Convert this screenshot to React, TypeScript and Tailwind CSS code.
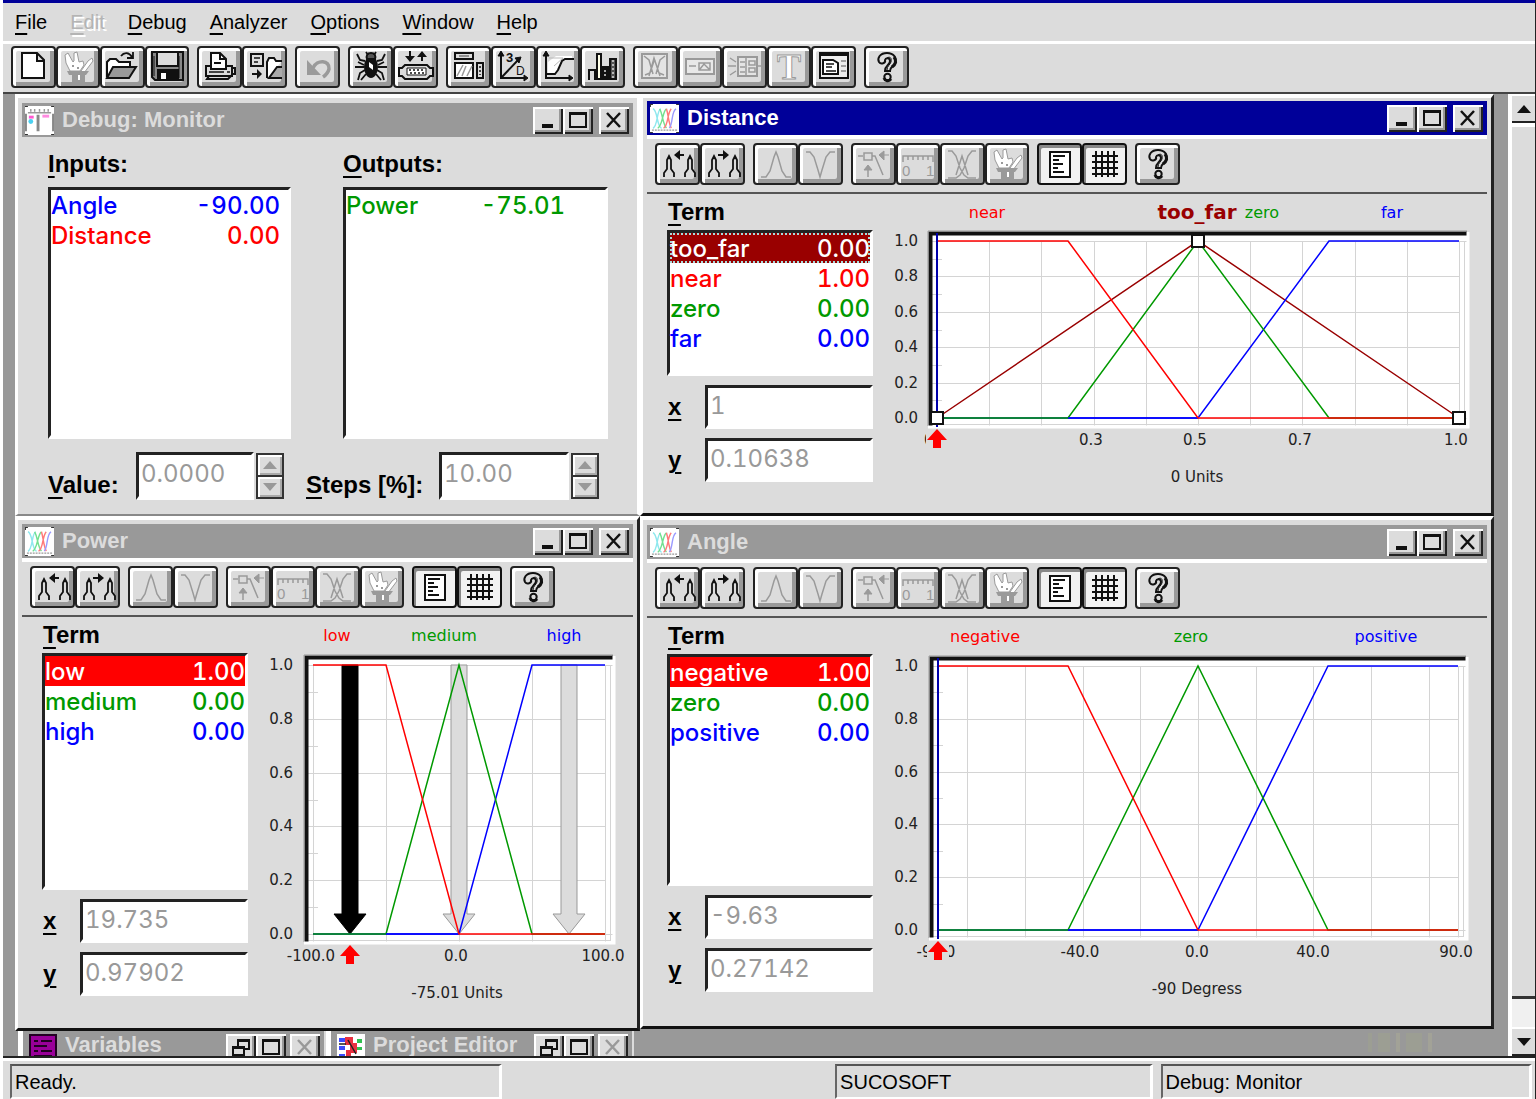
import React from "react";

const INK = "#111111";
const DIM = "#9a9a9a";

/* ---------- icons ---------- */

function Glyph({ children }: { children: React.ReactNode }) {
  return (
    <svg viewBox="0 0 40 38" className="h-[38px] w-10 shrink-0" fill="none" stroke={INK} strokeWidth="2" aria-hidden="true">
      {children}
    </svg>
  );
}

const Rabbit = () => (
  <g stroke="none">
    <path d="M7 7l3-2 5 9 1-1V5l3-1 2 10 4-1 1 4-4 6H12l-4-8z" fill="#fff" stroke={DIM} strokeWidth="1" />
    <path d="M30 13l4-3 1 3-9 12-3-2z" fill="#fff" stroke={DIM} strokeWidth="1" />
    <path d="M9 23h22l-3 4h-1v7H14v-7h-3z" fill={DIM} />
    <path d="M14 17h2v2h-2zM19 19h2v2h-2z" fill={DIM} />
    <path d="M20 27h2v5h-2z" fill="#fff" />
  </g>
);

const Question = () => (
  <g>
    <path d="M12 14c-2-4 1-9 8-9s10 5 8 10c-1 3-5 4-5 8h-5c0-6 5-6 5-10 0-3-4-4-5-1 1 3-4 5-6 2z" fill="#dcdcdc" />
    <path d="M20 10c3-2 5 0 4 4-1 3-4 4-4 8" strokeWidth="1" />
    <circle cx="20.500" cy="29" r="3.200" fill="#dcdcdc" />
    <path d="M17 30c1 3 5 4 7 1M27 9c3 4 2 7-2 10" strokeWidth="3" />
  </g>
);

const CrossCurves = () => (
  <g stroke={DIM}>
    <path d="M6 6h4l4 5 4 12 4 7 4 3h8M34 6h-4l-4 5-4 12-4 7-4 3H6M14 30l6-19 6 19" strokeWidth="1.500" />
  </g>
);

const TwoPeaks = "M6 32v-4l3-4V15l2-4 2 4v9l3 4v4M27 32v-4l3-4V15l2-4 2 4v9l3 4v4";

const ICONS: Record<string, React.ReactNode> = {
  new: <path d="M9 5h15l7 7v18H9zM24 5v8h7" fill="#fff" />,
  rabbit: <Rabbit />,
  open: (
    <g>
      <path d="M5 29V14l3-3h6l3 3h11v5" fill="#fff" />
      <path d="M5 30l6-11h23l-7 11z" fill="#999" />
      <path d="M19 8c3-4 8-4 11 1M31 4v6h-6" strokeWidth="1.800" />
    </g>
  ),
  save: (
    <g>
      <path d="M5 4h31v28H8l-3-3z" fill="#888" />
      <path d="M10 4h21v14H10z" fill="#dcdcdc" />
      <path d="M11 22h20v10H11z" fill="#111" />
      <path d="M14 25h5v6h-5z" fill="#fff" stroke="none" />
      <path d="M32 8v22M7 8v20" strokeWidth="1" />
    </g>
  ),
  print: (
    <g>
      <path d="M6 18h26v10H6z" fill="#dcdcdc" />
      <path d="M11 21V5h9l6 6v10z" fill="#fff" />
      <path d="M20 5v6h6" />
      <path d="M32 20h3v6h-3" />
      <path d="M9 28l-2 3h21l4-4M14 15h7" />
      <path d="M9 24h15M27 24h3" strokeWidth="1.500" />
    </g>
  ),
  transfer: (
    <g>
      <path d="M6 6h12v12H6z" fill="#dcdcdc" />
      <path d="M9 10h6M9 14h4" strokeWidth="1.500" />
      <path d="M7 26h8" />
      <path d="M12 21l5 5-5 5z" fill="#111" stroke="none" />
      <path d="M22 30V14l2-4h5l2 3h6" fill="#fff" />
      <path d="M37 19h-5l-8 11h13" fill="#aaa" />
    </g>
  ),
  undo: (
    <g stroke={DIM} fill={DIM}>
      <path d="M9 12v15h14z" stroke="none" />
      <path d="M15 20c4-9 17-8 16 1-1 4-3 6-6 8" fill="none" strokeWidth="3.500" />
    </g>
  ),
  bug: (
    <g>
      <ellipse cx="20" cy="19" rx="6" ry="10" fill="#111" />
      <path d="M20 5c-4 0-5 3-4 6h8c1-3 0-6-4-6z" fill="#555" />
      <path d="M15 4l2 3M25 4l-2 3M14 13L9 12 6 6M26 13l5-1 3-6M13 19H4M27 19h9M14 22l-5 3-2 7M26 22l5 3 2 7M15 26l-5 6M25 26l5 6M7 14l6 3M33 14l-6 3" strokeWidth="1.800" />
      <path d="M18 14l4 3v5l-4-3z" fill="#fff" stroke="none" />
    </g>
  ),
  port: (
    <g>
      <path d="M14 3v8M26 13V7" />
      <path d="M9 8h10l-5 6zM21 9h10l-5-6z" fill="#111" stroke="none" />
      <path d="M9 17h22l3 3h3v8h-3l-3 3H9l-3-3H3v-8h3z" fill="#dcdcdc" />
      <path d="M11 20h19v7H11z" fill="#fff" strokeWidth="1" />
      <path d="M13 22h16M14 25h14" strokeWidth="1.500" strokeDasharray="2 2" />
    </g>
  ),
  blocks: (
    <g>
      <path d="M7 5h18v6H7z" fill="#ddd" />
      <path d="M11 8h10" strokeWidth="1.500" stroke="#777" />
      <path d="M7 15h18v15H7z" fill="#fff" />
      <path d="M9 28l6-11M14 28l4-10M19 28l5-10" strokeWidth="1.500" stroke="#999" />
      <path d="M29 15h6v15h-6z" fill="#ddd" />
      <path d="M32 18v9" strokeWidth="1.500" strokeDasharray="2 2" />
    </g>
  ),
  axes3d: (
    <g>
      <path d="M8 4v26h25M8 30L26 11" />
      <path d="M5 8l3-5 3 5zM31 27l4 3-4 3zM22 10l6-1-2 6z" fill="#111" strokeWidth="1" />
      <text x="13" y="14" fill={INK} stroke="none" fontFamily="Liberation Sans" fontWeight="700" fontSize="13">3</text>
      <text x="23" y="27" fill={INK} stroke="none" fontFamily="Liberation Sans" fontSize="12">D</text>
    </g>
  ),
  curve: (
    <g>
      <path d="M10 26V14l8-6h16v4h-8l-8 15z" fill="#fff" stroke="none" />
      <path d="M11 10h14l-9 8" stroke="#bbb" strokeWidth="1" />
      <path d="M8 4v26h25M8 26h9l3-4 4-9 3-2h9" />
      <path d="M5 8l3-5 3 5zM31 27l4 3-4 3z" fill="#111" strokeWidth="1" />
    </g>
  ),
  bars: (
    <g>
      <path d="M6 32V22h6v10" fill="#dcdcdc" />
      <path d="M14 31V6h4v25z" fill="#ffffe8" />
      <path d="M19 19h7v12h-7z" fill="#111" />
      <path d="M27 11h6v20h-6z" fill="#555" />
      <path d="M30 12v18M22 22v6" stroke="#ddd" strokeDasharray="2 2" strokeWidth="1.500" />
    </g>
  ),
  crossBox: (
    <g stroke={DIM}>
      <path d="M7 6h25v24H7z" fill="#e4e4e4" />
      <path d="M9 8l5 4 4 14M30 8l-5 4-4 14M14 28l5-18 6 18M10 27l5-2 4-12M29 27l-5-2-4-12" strokeWidth="1.500" />
    </g>
  ),
  paramBox: (
    <g stroke={DIM}>
      <path d="M6 11h28v15H6z" fill="#e8e8e8" />
      <path d="M9 18h7M19 15h11v7H19zM20 21l4-5 5 5" strokeWidth="1.500" />
    </g>
  ),
  chip: (
    <g stroke={DIM}>
      <path d="M14 9h19v19H14z" fill="#e4e4e4" />
      <path d="M6 10l6 4M4 18h8M6 27l6-4M22 10v17M16 14h5M16 19h5M16 24h5M25 13h6v4h-6zM25 20h6v4h-6zM33 18h4" strokeWidth="1.500" />
    </g>
  ),
  text: (
    <text x="20" y="31" textAnchor="middle" fill="#fff" stroke={DIM} strokeWidth="1" fontFamily="Liberation Serif" fontWeight="700" fontSize="36">
      T
    </text>
  ),
  dialog: (
    <g>
      <path d="M6 5h28v25H6z" fill="#eee" />
      <path d="M5 6h30" strokeWidth="4" />
      <path d="M9 12h10l5 3v11H9z" fill="#fff" />
      <path d="M12 16h8M12 19h6M12 23h10" strokeWidth="1.500" />
      <path d="M27 13h5M27 18h5M27 23h5" stroke="#888" strokeWidth="1.500" />
    </g>
  ),
  help: <Question />,
  peaksLeft: (
    <g>
      <path d={TwoPeaks} strokeWidth="1.800" />
      <path d="M17 10h9" />
      <path d="M22 5v10l-6-5z" fill="#111" stroke="none" />
    </g>
  ),
  peaksRight: (
    <g>
      <path d={TwoPeaks} strokeWidth="1.800" />
      <path d="M15 10h9" />
      <path d="M20 5v10l6-5z" fill="#111" stroke="none" />
    </g>
  ),
  peak: <path d="M5 32h5l4-6 4-14 2-5 2 5 4 14 4 6h5" stroke={DIM} strokeWidth="1.500" />,
  valley: <path d="M5 7h4l4 5 4 13 2 7 2-7 4-13 4-5h5" stroke={DIM} strokeWidth="1.500" />,
  handle: (
    <g stroke={DIM}>
      <path d="M5 11h5M11 8h8v7h-8zM19 11h3l8 19M15 32V22" strokeWidth="1.500" />
      <path d="M11 25l4-5 4 5zM31 6v9l-5-5zM30 10h6" fill={DIM} strokeWidth="1" />
    </g>
  ),
  ruler: (
    <g stroke={DIM}>
      <path d="M5 17v-6h30v6M10 11v4M15 11v4M20 11v4M25 11v4M30 11v4" strokeWidth="1.500" />
      <text x="4" y="31" fill={DIM} stroke="none" fontFamily="Liberation Sans" fontSize="15">0</text>
      <text x="28" y="31" fill={DIM} stroke="none" fontFamily="Liberation Sans" fontSize="15">1</text>
    </g>
  ),
  cross: <CrossCurves />,
  page: (
    <g>
      <path d="M10 7h20v25H10z" fill="#fff" />
      <path d="M13 11h12M13 15h6M13 19h10M13 23h5M13 27h11" />
    </g>
  ),
  grid: <path d="M11 6v26M17 6v26M23 6v26M29 6v26M7 11h26M7 17h26M7 23h26M7 29h26" />,
};

const CurvesMark = () => (
  <svg viewBox="0 0 30 30" className="h-[29px] w-[29px] shrink-0" fill="none" strokeWidth="1.500" aria-hidden="true">
    <rect width="30" height="30" fill="#fff" />
    <path d="M3 5c5 1 4 19 9 20M3 25c5-1 4-19 8-20" stroke="#8fe8ee" />
    <path d="M8 25c5-2 5-18 9-20M10 5c3 5 3 15 7 20" stroke="#72e090" />
    <path d="M14 25c5-2 4-17 8-20M17 5c2 6 2 14 5 20" stroke="#ff7a7a" />
    <path d="M20 25c4-5 2-18 7-20" stroke="#9a9aff" />
    <path d="M2 27h26" stroke="#999" strokeDasharray="2 1" />
    <path d="M0 0h3M0 0v3M27 0h3M0 30h3M27 30h3" stroke="#333" strokeWidth="2" />
  </svg>
);

const MonitorMark = () => (
  <svg viewBox="0 0 30 30" className="h-[29px] w-[29px] shrink-0" aria-hidden="true">
    <rect width="30" height="30" fill="#fff" />
    <path d="M3 7h24M6 3v3M10 3v3M15 3v3M20 3v3M24 3v3" stroke="#999" strokeWidth="1.500" />
    <path d="M0 8h2v18H0zM28 8h2v18h-2zM12 9h3v17h-3z" fill="#888" />
    <path d="M4 10h5v3H4z" fill="#ff5ad0" />
    <path d="M18 9h7v3h-7z" fill="#ff8ae0" />
    <circle cx="6" cy="16" r="2.500" fill="#4ad0f0" />
    <path d="M0 0h3M27 0h3M0 30h3M27 30h3" stroke="#333" strokeWidth="2" />
  </svg>
);

/* ---------- building blocks ---------- */

function ToolButton({ icon, label, pressed = false }: { icon: string; label: string; pressed?: boolean }) {
  return (
    <button
      type="button"
      aria-label={label}
      className={
        pressed
          ? "flex h-[42px] flex-1 items-center justify-center overflow-hidden rounded border-2 border-[#111] bg-[#f2f2f2] shadow-[inset_2px_3px_0_#888]"
          : "flex h-[42px] flex-1 items-center justify-center overflow-hidden rounded border-2 border-[#222] bg-[#dcdcdc] shadow-[inset_3px_3px_0_#fff,inset_-4px_-4px_0_#999]"
      }
    >
      <Glyph>{ICONS[icon]}</Glyph>
    </button>
  );
}

function WindowButton({ kind, label, faded = false }: { kind: "min" | "max" | "close" | "restore"; label: string; faded?: boolean }) {
  const ink = faded ? "#999" : "#111";
  return (
    <button
      type="button"
      aria-label={label}
      className="h-[27px] w-[30px] shrink-0 bg-[#dcdcdc] shadow-[inset_2px_2px_0_#fff,inset_-2px_-2px_0_#222,inset_-4px_-4px_0_#999]"
    >
      <svg viewBox="0 0 30 27" className="h-[27px] w-[30px]" fill="none" stroke={ink} strokeWidth="2" aria-hidden="true">
        {kind === "min" && <path d="M9 19h11" strokeWidth="4" />}
        {kind === "max" && <path d="M7 7h16v13H7zM6 6h18" shapeRendering="crispEdges" />}
        {kind === "close" && <path d="M8 6l13 14M21 6L8 20" strokeWidth="2.500" />}
        {kind === "restore" && <path d="M12 13V6h11v9h-4M11 7h13M7 13h11v8H7zM6 14h13" />}
      </svg>
    </button>
  );
}

function TitleBar({ title, mark, active = false }: { title: string; mark: React.ReactNode; active?: boolean }) {
  return (
    <header
      className={
        active
          ? "flex h-[34px] items-center bg-[#000099] pl-[3px] pr-1 text-white"
          : "flex h-[34px] items-center bg-[#999999] pl-[3px] pr-1 text-[#dcdcdc]"
      }
    >
      {mark}
      <h2 className="ml-2 flex-1 truncate text-[22px] font-bold leading-[34px]">{title}</h2>
      <div className="flex">
        <WindowButton kind="min" label="Minimize" />
        <WindowButton kind="max" label="Maximize" />
        <div className="ml-[6px] flex">
          <WindowButton kind="close" label="Close" />
        </div>
      </div>
    </header>
  );
}

function TermToolbar() {
  return (
    <div className="flex gap-2 border-b-2 border-[#555] border-t-4 border-t-white pb-[7px] pl-2 pt-1">
      <div className="flex w-[90px]">
        <ToolButton icon="peaksLeft" label="Previous term" />
        <ToolButton icon="peaksRight" label="Next term" />
      </div>
      <div className="flex w-[90px]">
        <ToolButton icon="peak" label="Peak" />
        <ToolButton icon="valley" label="Valley" />
      </div>
      <div className="flex w-[178px]">
        <ToolButton icon="handle" label="Edit points" />
        <ToolButton icon="ruler" label="Range" />
        <ToolButton icon="cross" label="Standard terms" />
        <ToolButton icon="rabbit" label="Wizard" />
      </div>
      <div className="flex w-[90px]">
        <ToolButton icon="page" label="Show terms" pressed />
        <ToolButton icon="grid" label="Show grid" pressed />
      </div>
      <div className="flex w-[45px]">
        <ToolButton icon="help" label="Help" />
      </div>
    </div>
  );
}

type Tone = "red" | "green" | "blue" | "maroon";
const STROKE: Record<Tone, string> = { red: "#ff0000", green: "#009900", blue: "#0000ff", maroon: "#990000" };
const TEXT: Record<Tone, string> = {
  red: "text-[#ff0000]",
  green: "text-[#009900]",
  blue: "text-[#0000ff]",
  maroon: "text-[#990000]",
};
const SELECTED: Record<Tone, string> = {
  red: "bg-[#ff0000] text-white",
  green: "bg-[#009900] text-white",
  blue: "bg-[#0000ff] text-white",
  maroon: "bg-[#990000] text-white outline-2 -outline-offset-2 outline-dotted outline-[#a8dcdc]",
};

type Row = { name: string; value: string; tone: Tone; selected?: boolean };

function ListBox({ rows, label, className, rowClass }: { rows: Row[]; label: string; className: string; rowClass: string }) {
  return (
    <ul
      role="listbox"
      aria-label={label}
      className={`border-b-4 border-l-[3px] border-r-[3px] border-t-[3px] border-b-white border-l-[#222] border-r-white border-t-[#222] bg-white ${className}`}
    >
      {rows.map((r) => (
        <li
          key={r.name}
          role="option"
          aria-selected={!!r.selected}
          className={`flex h-[30px] justify-between pt-px font-[Inter] text-2xl font-medium leading-[30px] tabular-nums ${rowClass} ${r.selected ? SELECTED[r.tone] : TEXT[r.tone]}`}
        >
          <span>{r.name}</span>
          <span>{r.value}</span>
        </li>
      ))}
    </ul>
  );
}

const FIELD =
  "min-w-0 border-b-4 border-l-[3px] border-r-[3px] border-t-[3px] border-b-white border-l-[#222] border-r-white border-t-[#222] bg-white pl-[2px] font-[Inter] text-2xl text-[#999] tabular-nums";

function Hot({ text }: { text: string }) {
  return (
    <>
      <span className="underline decoration-2 underline-offset-4">{text[0]}</span>
      {text.slice(1)}
    </>
  );
}

function Coordinate({ id, axis, value }: { id: string; axis: string; value: string }) {
  return (
    <div className="mt-[9px] flex h-11 items-center">
      <label htmlFor={id} className="w-[38px] shrink-0 pl-px text-2xl font-bold">
        <Hot text={axis} />
      </label>
      <input id={id} defaultValue={value} readOnly className={`h-11 w-full pb-[3px] ${FIELD}`} />
    </div>
  );
}

/* ---------- membership chart ---------- */

type ChartProps = {
  label: string;
  width: number;
  height: number;
  plot: { x0: number; x1: number; top: number; bottom: number };
  names: { text: string; x: number; tone: Tone; strong?: boolean }[];
  series: { tone: Tone; points: [number, number][] }[];
  gridX: number[];
  ticks: { text: string; x: number }[];
  marker: number;
  markerLine?: boolean;
  arrows?: { at: number; solid: boolean }[];
  handles?: [number, number][];
  units: string;
  unitsX: number;
};

function Chart(p: ChartProps) {
  const { x0, x1, top, bottom } = p.plot;
  const px = (t: number) => Math.round(x0 + t * (x1 - x0));
  const py = (v: number) => Math.round(bottom - v * (bottom - top));
  const bx0 = x0 - 8;
  const bx1 = x1 + 8;
  const by0 = top - 9;
  const by1 = bottom + 8;
  const mx = px(p.marker);
  return (
    <svg viewBox={`0 0 ${p.width} ${p.height}`} className="h-auto w-full" role="img" aria-label={p.label} fontFamily="DejaVu Sans, sans-serif">
      <rect x={bx0} y={by0} width={bx1 - bx0} height={by1 - by0} fill="#fff" />
      <g fill="none" stroke="#d4d4d4" strokeWidth="1" shapeRendering="crispEdges">
        {p.gridX.map((g) => (
          <path key={g} d={`M${px(g)} ${top}V${by1}`} />
        ))}
        {[0, 0.2, 0.4, 0.6, 0.8, 1].map((v) => (
          <path key={v} d={`M${bx0 + 3} ${py(v)}H${x1 + (v === 0 || v === 1 ? 8 : 0)}`} />
        ))}
        {[0.1, 0.3, 0.5, 0.7, 0.9].map((v) => (
          <path key={v} d={`M${bx0 + 3} ${py(v)}h10`} />
        ))}
        <path d={`M${x1 + 5} ${top}V${by1 - 2}H${bx0 + 3}`} />
      </g>
      {p.arrows?.map((a) => {
        const x = px(a.at);
        return (
          <path
            key={a.at}
            d={`M${x - 8} ${top}H${x + 8}V${bottom - 20}H${x + 16}L${x} ${bottom}L${x - 16} ${bottom - 20}H${x - 8}Z`}
            fill={a.solid ? "#000" : "#dcdcdc"}
            stroke={a.solid ? "#000" : "#999"}
          />
        );
      })}
      <g fill="none" strokeWidth="1.500">
        {p.series.map((s, i) => (
          <polyline key={i} points={s.points.map(([t, v]) => `${px(t)},${py(v)}`).join(" ")} stroke={STROKE[s.tone]} />
        ))}
      </g>
      <path d={`M${bx0 + 1.5} ${by1}V${by0 + 1.5}H${bx1}`} fill="none" stroke="#111" strokeWidth="4" />
      <path d={`M${bx0 - 1} ${by1}V${by0 - 1}H${bx1}`} fill="none" stroke="#999" strokeWidth="1" />
      <path d={`M${bx0 - 1} ${by1 + 1}H${bx1 + 1}V${by0}`} fill="none" stroke="#fff" strokeWidth="3" />
      {p.markerLine && <path d={`M${mx} ${by0 + 1}V${by1 + 1}`} stroke="#0000aa" strokeWidth="2" />}
      {p.handles?.map(([t, v]) => (
        <rect key={t} x={px(t) - 6} y={py(v) - 6} width="12" height="12" fill="#fff" stroke="#111" strokeWidth="2" shapeRendering="crispEdges" />
      ))}
      <g fill="#222" fontSize="15" textAnchor="end">
        {["0.0", "0.2", "0.4", "0.6", "0.8", "1.0"].map((t, i) => (
          <text key={t} x="35" y={py(i / 5) + 5}>{t}</text>
        ))}
      </g>
      <g fill="#222" fontSize="15" textAnchor="middle">
        {p.ticks.map((t) => (
          <text key={t.text} x={t.x} y={bottom + 27}>{t.text}</text>
        ))}
        <text x={p.unitsX} y={bottom + 64}>{p.units}</text>
      </g>
      {p.markerLine && <rect x={mx - 11} y={bottom + 11} width="22" height="20" fill="#dcdcdc" />}
      <path d={`M${mx} ${bottom + 11}l10 11h-6v8h-8v-8h-6z`} fill="#ff0000" />
      {p.names.map((n) => (
        <text key={n.text} x={n.x} y={n.strong ? 25 : 24} fill={STROKE[n.tone]} fontSize={n.strong ? 20 : 16} fontWeight={n.strong ? 700 : 400} textAnchor="middle">
          {n.text}
        </text>
      ))}
    </svg>
  );
}

/* ---------- variable windows ---------- */

function VariableWindow(props: {
  id: string;
  title: string;
  active?: boolean;
  frame: string;
  listHeight: string;
  rows: Row[];
  x: string;
  y: string;
  chart: ChartProps;
}) {
  return (
    <section className={`border-b-[3px] border-l-[3px] border-r-[3px] border-t-4 border-b-[#111] border-l-white border-r-[#222] border-t-white bg-[#dcdcdc] px-1 ${props.frame}`}>
      <TitleBar title={props.title} mark={<CurvesMark />} active={props.active} />
      <TermToolbar />
      <div className="flex gap-[10px] pl-5">
        <div className="w-[206px] shrink-0">
          <h3 className="pl-px text-2xl font-bold leading-9">
            <Hot text="Term" />
          </h3>
          <ListBox rows={props.rows} label={`${props.title} terms`} className={props.listHeight} rowClass="" />
          <Coordinate id={`${props.id}-x`} axis="x" value={props.x} />
          <Coordinate id={`${props.id}-y`} axis="y" value={props.y} />
        </div>
        <div className="min-w-0 flex-1">
          <Chart {...props.chart} />
        </div>
      </div>
    </section>
  );
}

function triple(): { tone: Tone; points: [number, number][] }[] {
  return [
    { tone: "blue", points: [[0, 0], [0.5, 0], [0.75, 1], [1, 1]] },
    { tone: "green", points: [[0, 0], [0.25, 0], [0.5, 1], [0.75, 0], [1, 0]] },
    { tone: "blue", points: [[0.25, 0], [0.5, 0]] },
    { tone: "red", points: [[0, 1], [0.25, 1], [0.5, 0], [1, 0]] },
  ];
}

const POWER: ChartProps = {
  label: "Power membership functions",
  width: 375,
  height: 388,
  plot: { x0: 55, x1: 347, top: 48, bottom: 317 },
  names: [
    { text: "low", x: 79, tone: "red" },
    { text: "medium", x: 186, tone: "green" },
    { text: "high", x: 306, tone: "blue" },
  ],
  series: triple(),
  gridX: [0, 0.25, 0.5, 0.75, 1],
  ticks: [
    { text: "-100.0", x: 53 },
    { text: "0.0", x: 198 },
    { text: "100.0", x: 345 },
  ],
  marker: 0.125,
  arrows: [
    { at: 0.125, solid: true },
    { at: 0.5, solid: false },
    { at: 0.875, solid: false },
  ],
  units: "-75.01 Units",
  unitsX: 199,
};

const DISTANCE: ChartProps = {
  label: "Distance membership functions",
  width: 604,
  height: 300,
  plot: { x0: 54, x1: 576, top: 47, bottom: 224 },
  names: [
    { text: "near", x: 104, tone: "red" },
    { text: "too_far", x: 314, tone: "maroon", strong: true },
    { text: "zero", x: 379, tone: "green" },
    { text: "far", x: 509, tone: "blue" },
  ],
  series: [{ tone: "maroon", points: [[0, 0], [0.5, 1], [1, 0]] }, ...triple()],
  gridX: [0.1, 0.2, 0.3, 0.4, 0.5, 0.6, 0.7, 0.8, 0.9, 1],
  ticks: [
    { text: "0.0", x: 53 },
    { text: "0.3", x: 208 },
    { text: "0.5", x: 312 },
    { text: "0.7", x: 417 },
    { text: "1.0", x: 573 },
  ],
  marker: 0,
  markerLine: true,
  handles: [[0, 0], [0.5, 1], [1, 0]],
  units: "0 Units",
  unitsX: 314,
};

const ANGLE: ChartProps = {
  label: "Angle membership functions",
  width: 604,
  height: 384,
  plot: { x0: 55, x1: 575, top: 48, bottom: 312 },
  names: [
    { text: "negative", x: 102, tone: "red" },
    { text: "zero", x: 308, tone: "green" },
    { text: "positive", x: 503, tone: "blue" },
  ],
  series: triple(),
  gridX: [0.056, 0.167, 0.278, 0.389, 0.5, 0.611, 0.722, 0.833, 0.944, 1],
  ticks: [
    { text: "-90.0", x: 53 },
    { text: "-40.0", x: 197 },
    { text: "0.0", x: 314 },
    { text: "40.0", x: 430 },
    { text: "90.0", x: 573 },
  ],
  marker: 0,
  markerLine: true,
  units: "-90 Degress",
  unitsX: 314,
};

/* ---------- debug monitor ---------- */

function Spinner({ label }: { label: string }) {
  const face = "flex flex-1 items-center justify-center bg-[#dcdcdc] shadow-[inset_2px_2px_0_#fff,inset_-2px_-2px_0_#aaa]";
  return (
    <div className="ml-[2px] flex h-[46px] w-7 shrink-0 flex-col gap-[2px] border-2 border-[#333] bg-[#333]">
      <button type="button" aria-label={`Increase ${label}`} className={face}>
        <svg viewBox="0 0 14 8" className="h-2 w-[14px]" aria-hidden="true"><path d="M7 0l7 8H0z" fill="#999" /></svg>
      </button>
      <button type="button" aria-label={`Decrease ${label}`} className={face}>
        <svg viewBox="0 0 14 8" className="h-2 w-[14px]" aria-hidden="true"><path d="M0 0h14L7 8z" fill="#999" /></svg>
      </button>
    </div>
  );
}

function DebugMonitor() {
  return (
    <section className="border-b-2 border-l-[3px] border-r-[3px] border-t-4 border-b-[#888] border-l-white border-r-white border-t-white bg-[#dcdcdc] px-1 pb-[14px] pt-[5px]">
      <TitleBar title="Debug: Monitor" mark={<MonitorMark />} />
      <div className="flex gap-[52px] pl-[26px] pr-[25px] pt-[9px]">
        <div className="min-w-0 flex-[243]">
          <h3 className="text-2xl font-bold leading-9"><Hot text="Inputs:" /></h3>
          <ListBox
            label="Inputs"
            className="mt-[5px] h-[252px]"
            rowClass="pr-2"
            rows={[
              { name: "Angle", value: "-90.00", tone: "blue" },
              { name: "Distance", value: "0.00", tone: "red" },
            ]}
          />
        </div>
        <div className="min-w-0 flex-[265]">
          <h3 className="text-2xl font-bold leading-9"><Hot text="Outputs:" /></h3>
          <ListBox
            label="Outputs"
            className="mt-[5px] h-[252px]"
            rowClass="pr-10"
            rows={[{ name: "Power", value: "-75.01", tone: "green" }]}
          />
        </div>
      </div>
      <div className="mt-[13px] flex items-center pl-[26px]">
        <label htmlFor="value" className="w-[88px] shrink-0 pt-[18px] text-2xl font-bold leading-[30px]"><Hot text="Value:" /></label>
        <input id="value" defaultValue="0.0000" readOnly className={`h-12 w-[118px] pb-1 ${FIELD}`} />
        <Spinner label="value" />
        <label htmlFor="steps" className="ml-[22px] w-[133px] shrink-0 pt-[18px] text-2xl font-bold leading-[30px]"><Hot text="Steps [%]:" /></label>
        <input id="steps" defaultValue="10.00" readOnly className={`h-12 w-[130px] pb-1 ${FIELD}`} />
        <Spinner label="steps" />
      </div>
    </section>
  );
}

function MinimizedWindow({ title, mark }: { title: string; mark: React.ReactNode }) {
  return (
    <div className="flex min-w-0 flex-1 items-start border-l-[5px] border-r-2 border-l-white border-r-[#dcdcdc] bg-[#999] pl-[6px] pr-1 pt-[3px]">
      {mark}
      <span className="ml-2 flex-1 whitespace-nowrap text-[22px] font-bold leading-[22px] text-[#dcdcdc]">{title}</span>
      <WindowButton kind="restore" label={`Restore ${title}`} />
      <WindowButton kind="max" label={`Maximize ${title}`} />
      <div className="ml-1 flex">
        <WindowButton kind="close" label={`Close ${title}`} faded />
      </div>
    </div>
  );
}

/* ---------- application frame ---------- */

const MENU = ["File", "Edit", "Debug", "Analyzer", "Options", "Window", "Help"];

export default function App() {
  return (
    <div className="flex min-h-screen flex-col border-r border-[#222] bg-[#dcdcdc] pl-[3px] font-['Liberation_Sans',Arial,sans-serif] text-black shadow-[inset_3px_0_0_#fff]">
      <div className="h-[3px] bg-[#000099]" />
      <nav className="flex h-[38px] items-center gap-[23px] pl-3 text-xl">
        {MENU.map((m) => (
          <button key={m} type="button" disabled={m === "Edit"} className="disabled:text-[#b4b4b4] disabled:[text-shadow:2px_2px_0_#fff]">
            <span className="underline underline-offset-4">{m[0]}</span>
            {m.slice(1)}
          </button>
        ))}
      </nav>
      <div className="flex gap-2 border-b-2 border-t-[3px] border-b-[#444] border-t-white pb-1 pl-2 pt-[2px]">
        <div className="flex w-[178px]">
          <ToolButton icon="new" label="New" />
          <ToolButton icon="rabbit" label="Wizard" />
          <ToolButton icon="open" label="Open" />
          <ToolButton icon="save" label="Save" />
        </div>
        <div className="flex w-[90px]">
          <ToolButton icon="print" label="Print" />
          <ToolButton icon="transfer" label="Export" />
        </div>
        <div className="flex w-[45px]">
          <ToolButton icon="undo" label="Undo" />
        </div>
        <div className="flex w-[90px]">
          <ToolButton icon="bug" label="Debug" />
          <ToolButton icon="port" label="Serial connection" />
        </div>
        <div className="flex w-[179px]">
          <ToolButton icon="blocks" label="Rule table" />
          <ToolButton icon="axes3d" label="3D plot" />
          <ToolButton icon="curve" label="Transfer plot" />
          <ToolButton icon="bars" label="Statistics" />
        </div>
        <div className="flex w-[223px]">
          <ToolButton icon="crossBox" label="New variable" />
          <ToolButton icon="paramBox" label="Interface" />
          <ToolButton icon="chip" label="Rule block" />
          <ToolButton icon="text" label="Text" />
          <ToolButton icon="dialog" label="Options" />
        </div>
        <div className="flex w-[45px]">
          <ToolButton icon="help" label="Help" />
        </div>
      </div>

      <main className="flex flex-1 bg-[#999999] pl-3">
        <div className="grid min-w-0 flex-1 grid-cols-[625fr_854fr] pr-[14px]">
          <div className="flex min-w-0 flex-col">
            <DebugMonitor />
            <VariableWindow
              id="power"
              title="Power"
              frame="pt-1 pb-[23px]"
              listHeight="h-[237px]"
              rows={[
                { name: "low", value: "1.00", tone: "red", selected: true },
                { name: "medium", value: "0.00", tone: "green" },
                { name: "high", value: "0.00", tone: "blue" },
              ]}
              x="19.735"
              y="0.97902"
              chart={POWER}
            />
            <div className="mr-[6px] flex h-[25px] overflow-hidden pl-[3px]">
              <MinimizedWindow
                title="Variables"
                mark={
                  <svg viewBox="0 0 28 28" className="h-7 w-7 shrink-0" aria-hidden="true">
                    <rect width="28" height="28" fill="#220022" />
                    <rect x="2" y="2" width="24" height="26" fill="#990099" />
                    <path d="M5 7h4M12 7h11M5 12h4M9 12h9M5 17h4M12 17h11M5 22h18" stroke="#220022" strokeWidth="2" />
                  </svg>
                }
              />
              <MinimizedWindow
                title="Project Editor"
                mark={
                  <svg viewBox="0 0 28 28" className="h-7 w-7 shrink-0" aria-hidden="true">
                    <rect width="28" height="28" fill="#fff" />
                    <path d="M2 4h6v4H2zM2 12h6v4H2zM2 20h6v4H2z" fill="#3a4aff" />
                    <path d="M8 3h8v6h4v10h-6v5H9v-8h4v-5H8z" fill="#e83040" />
                    <path d="M20 5h5v4h-5zM20 13h5v3h-5z" fill="#30c050" />
                    <path d="M2 10h7M11 6l8 14" stroke="#222" strokeWidth="1.500" />
                  </svg>
                }
              />
            </div>
          </div>
          <div className="flex min-w-0 flex-col">
            <VariableWindow
              id="distance"
              title="Distance"
              active
              frame="pt-[3px] pb-[19px]"
              listHeight="h-[146px]"
              rows={[
                { name: "too_far", value: "0.00", tone: "maroon", selected: true },
                { name: "near", value: "1.00", tone: "red" },
                { name: "zero", value: "0.00", tone: "green" },
                { name: "far", value: "0.00", tone: "blue" },
              ]}
              x="1"
              y="0.10638"
              chart={DISTANCE}
            />
            <VariableWindow
              id="angle"
              title="Angle"
              frame="pt-[5px] pb-6"
              listHeight="h-[232px]"
              rows={[
                { name: "negative", value: "1.00", tone: "red", selected: true },
                { name: "zero", value: "0.00", tone: "green" },
                { name: "positive", value: "0.00", tone: "blue" },
              ]}
              x="-9.63"
              y="0.27142"
              chart={ANGLE}
            />
            <div className="mb-1 mr-[62px] mt-1 flex flex-1 justify-end gap-[6px]" aria-hidden="true">
              <div className="w-1 bg-[#9c9e93]" />
              <div className="w-3 bg-[#9c9e93]" />
              <div className="w-1 bg-[#a2a297]" />
              <div className="w-4 bg-[#9c9e93]" />
              <div className="w-1 bg-[#a2a297]" />
            </div>
          </div>
        </div>
        <div className="flex w-[27px] shrink-0 flex-col border-l-4 border-white bg-[#dcdcdc]">
          <button type="button" aria-label="Scroll up" className="flex h-[29px] items-center justify-center border-b-2 border-t-2 border-b-[#222] border-t-white">
            <svg viewBox="0 0 14 8" className="h-2 w-[14px]" aria-hidden="true"><path d="M7 0l7 8H0z" fill="#111" /></svg>
          </button>
          <div className="flex-1 border-b-[3px] border-t-4 border-b-[#333] border-t-white" />
          <div className="h-7 bg-[#f0f0f0]" />
          <button type="button" aria-label="Scroll down" className="flex h-[29px] items-center justify-center border-b-2 border-t-2 border-b-[#222] border-t-white">
            <svg viewBox="0 0 14 8" className="h-2 w-[14px]" aria-hidden="true"><path d="M0 0h14L7 8z" fill="#111" /></svg>
          </button>
        </div>
      </main>

      <footer className="flex h-[43px] border-t-2 border-[#222] text-xl shadow-[inset_0_3px_0_#fff]">
        <div className="ml-[7px] mt-[6px] flex flex-[483] items-center border-b-2 border-l-2 border-r-[3px] border-t-2 border-b-white border-l-[#666] border-r-white border-t-[#555] pl-[3px]">Ready.</div>
        <div className="flex-[333]" />
        <div className="mt-[6px] flex flex-[309] items-center border-b-2 border-l-2 border-r-[3px] border-t-2 border-b-white border-l-[#666] border-r-white border-t-[#555] pl-[3px]">SUCOSOFT</div>
        <div className="ml-2 mr-[3px] mt-[6px] flex flex-[363] items-center border-b-2 border-l-2 border-r-[3px] border-t-2 border-b-white border-l-[#666] border-r-white border-t-[#555] pl-[3px]">Debug: Monitor</div>
      </footer>
    </div>
  );
}
